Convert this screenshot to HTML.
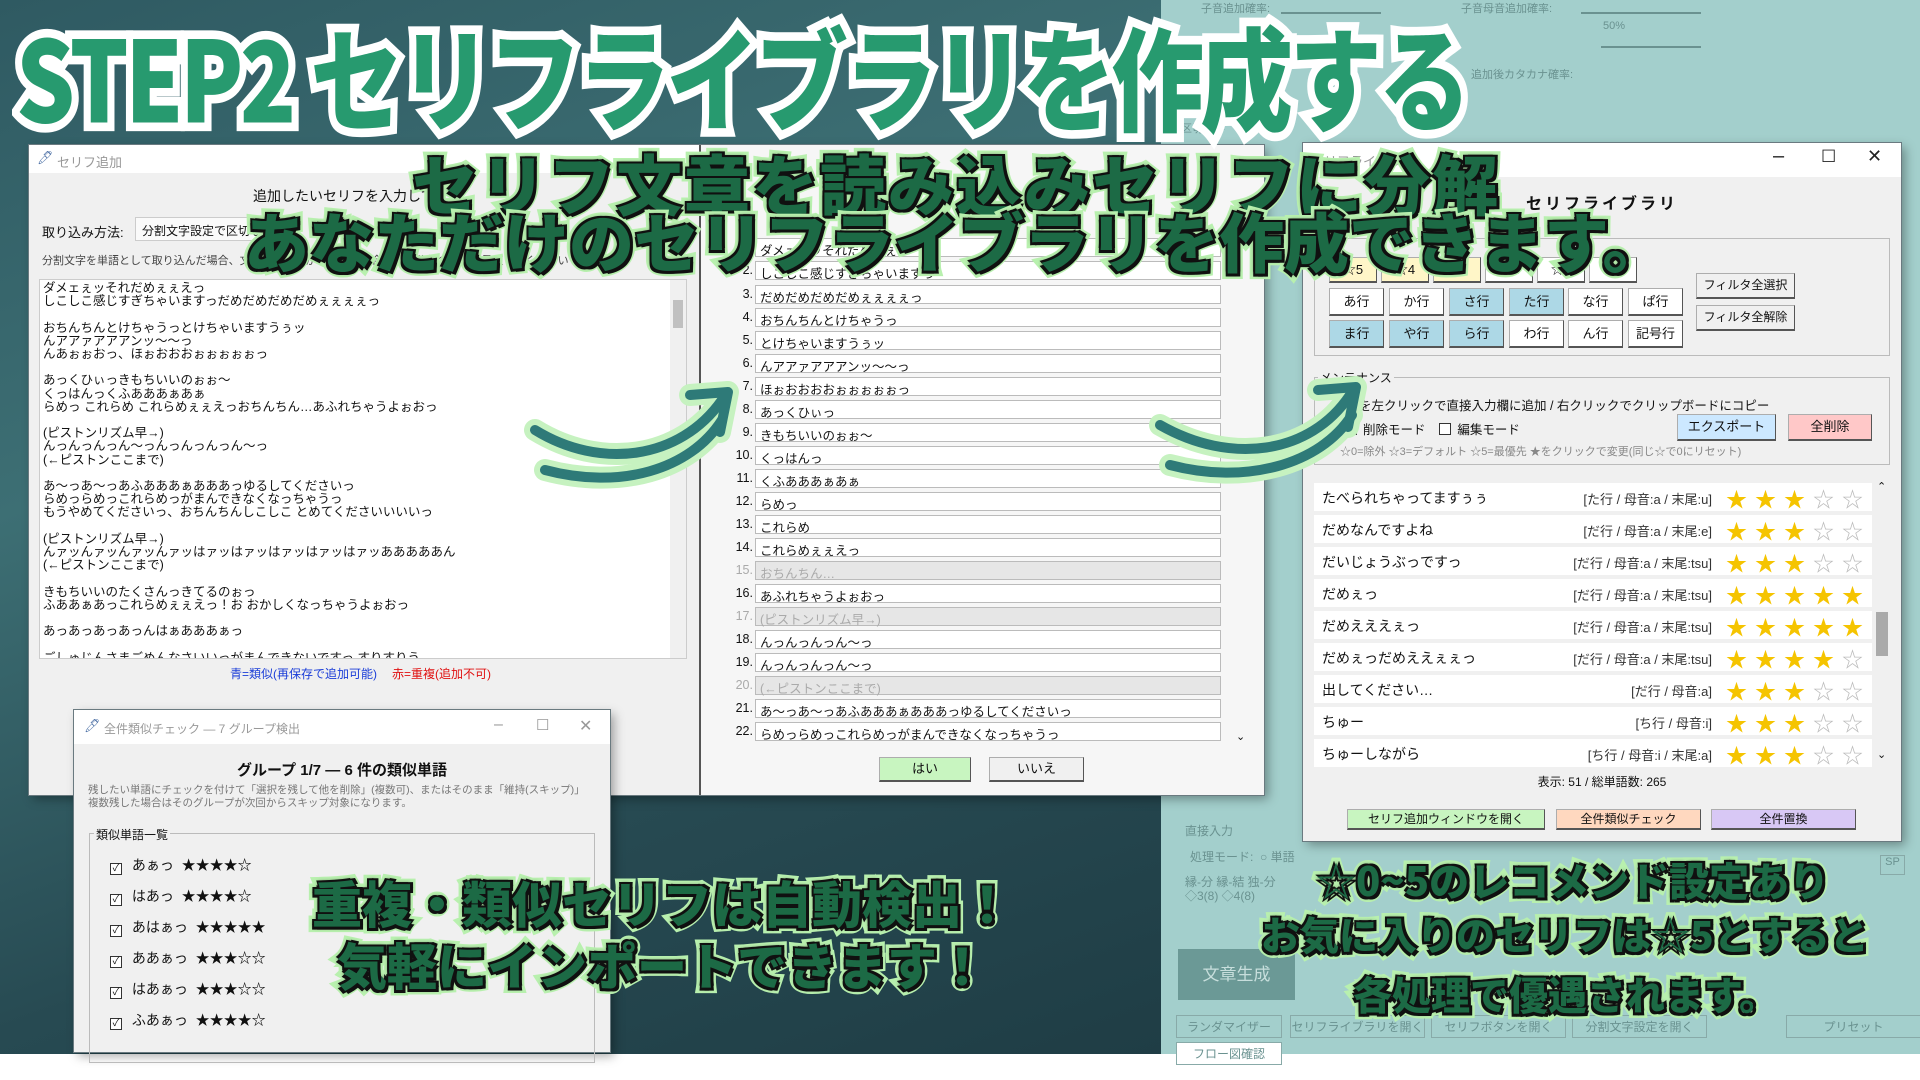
<!DOCTYPE html>
<html><head><meta charset="utf-8">
<style>
*{margin:0;padding:0;box-sizing:border-box}
body{width:1920px;height:1080px;overflow:hidden;position:relative;background:#fff;font-family:"Liberation Sans","Noto Sans CJK JP",sans-serif;color:#111}
.abs{position:absolute}
#bgl{left:0;top:0;width:1161px;height:1054px;background:linear-gradient(160deg,#2f5a62 0%,#3d6f74 35%,#274a52 70%,#1f3d45 100%)}
#bgr{left:1161px;top:0;width:759px;height:1054px;background:#a3cfcc}
.win{position:absolute;background:#f0f0f0;box-shadow:0 0 0 1px #6a7a80,4px 4px 10px rgba(0,0,0,.35)}
.tb{position:absolute;left:0;top:0;right:0;background:#fff;color:#999;font-size:13px}
.btn{position:absolute;border:1px solid #adadad;border-right-color:#555;border-bottom:2px solid #555;background:#fff;font-size:13px;text-align:center;font-family:"Liberation Sans","Noto Sans CJK JP",sans-serif}
.row{position:absolute;left:1314px;width:558px;height:28px;background:#fff;font-size:14px}
.row .w{position:absolute;left:8px;top:5px}
.row .t{position:absolute;right:160px;top:6px;font-size:13px;color:#333}
.row .s{position:absolute;left:412px;top:1px;font-size:21px;letter-spacing:8px;color:#f5c400}
.row .s i{font-style:normal;color:#bbb}
.nl{position:absolute;left:705px;width:520px;height:19px;font-size:12.5px}
.nl b{position:absolute;right:472px;font-weight:normal;top:2px}
.nl span{position:absolute;left:50px;width:466px;height:19px;background:#fff;border:1px solid #bbb;padding:1px 4px}
.nl.g span{background:#e6e6e6;color:#aaa}
.nl.g b{color:#aaa}
.ta{font-size:12.5px;line-height:13.2px;white-space:pre}
.title{font-family:"Noto Sans CJK JP",sans-serif;font-weight:900;white-space:nowrap;paint-order:stroke fill}
#t1{left:16px;top:-8px;font-size:104px;color:#279a6f;-webkit-text-stroke:16px #fff;letter-spacing:-4px;transform:scale(0.89,1.08);transform-origin:left top}
.sub{color:#1c6a45;-webkit-text-stroke:11px #b8f0ae;text-shadow:0 0 4px #111,3px 3px 0 #111,-2px -2px 0 #111,3px -2px 0 #111,-2px 3px 0 #111}
.cb{display:inline-block;width:12px;height:12px;border:1px solid #333;background:#fff;vertical-align:-1px;margin-right:6px;font-size:10px;line-height:10px;text-align:center}
</style></head><body>
<div id="bgl" class="abs"></div>
<div id="bgr" class="abs"></div>

<div class="abs" style="left:1161px;top:0;width:759px;height:140px;color:#6a9290;font-size:11px">
 <div class="abs" style="left:40px;top:0">子音追加確率:</div>
 <div class="abs" style="left:300px;top:0">子音母音追加確率:</div>
 <div class="abs" style="left:310px;top:66px">追加後カタカナ確率:</div>
 <div class="abs" style="left:442px;top:20px">50%</div>
 <div class="abs" style="left:440px;top:46px;width:100px;height:2px;background:#6a9290"></div>
 <div class="abs" style="left:120px;top:12px;width:100px;height:2px;background:#6a9290"></div>
 <div class="abs" style="left:420px;top:12px;width:120px;height:2px;background:#6a9290"></div>
 <div class="abs" style="left:20px;top:120px">区切文字</div>
</div>
<div class="abs" style="left:1178px;top:949px;width:117px;height:51px;background:#6b9996;color:#c7dedc;font-size:17px;text-align:center;line-height:51px">文章生成</div>
<div class="abs" style="left:1185px;top:822px;color:#6a9290;font-size:12px">直接入力</div>
<div class="abs" style="left:1190px;top:848px;color:#6a9290;font-size:12px">処理モード:&nbsp; ○ 単語</div>
<div class="abs" style="left:1185px;top:875px;color:#6a9290;font-size:12px;line-height:14px">縁-分 縁-結 独-分<br>◇3(8) ◇4(8)</div>
<div class="abs" style="left:1880px;top:855px;width:25px;height:20px;border:1px solid #88aaa8;color:#6a9290;font-size:11px;text-align:center">SP</div>
<div class="abs" style="left:1176px;top:1015px;width:1115px;height:24px;color:#6a9290;font-size:12px">
 <span class="abs" style="left:0;width:106px;height:23px;border:1px solid #88aaa8;text-align:center;line-height:22px">ランダマイザー</span>
 <span class="abs" style="left:114px;width:135px;height:23px;border:1px solid #88aaa8;text-align:center;line-height:22px">セリフライブラリを開く</span>
 <span class="abs" style="left:255px;width:135px;height:23px;border:1px solid #88aaa8;text-align:center;line-height:22px">セリフボタンを開く</span>
 <span class="abs" style="left:396px;width:135px;height:23px;border:1px solid #88aaa8;text-align:center;line-height:22px">分割文字設定を開く</span>
 <span class="abs" style="left:610px;width:135px;height:23px;border:1px solid #88aaa8;text-align:center;line-height:22px">プリセット</span>
</div>
<div class="abs" style="left:1176px;top:1042px;width:106px;height:23px;border:1px solid #88aaa8;color:#6a9290;font-size:12px;text-align:center;line-height:22px;background:#fff">フロー図確認</div>

<div class="win" style="left:29px;top:145px;width:1235px;height:650px">
 <div class="tb" style="height:28px"><span class="abs" style="left:8px;top:5px;color:#5577aa">🖊</span><span class="abs" style="left:28px;top:7px">セリフ追加</span></div>
 <div class="abs" style="left:224px;top:41px;font-size:14px">追加したいセリフを入力して</div>
 <div class="abs" style="left:13px;top:77px;font-size:13px">取り込み方法:</div>
 <div class="abs" style="left:106px;top:72px;width:150px;height:24px;background:#fafafa;border:1px solid #ccc;font-size:12px;padding:4px 6px">分割文字設定で区切る</div>
 <div class="abs" style="left:13px;top:107px;font-size:11px;color:#444">分割文字を単語として取り込んだ場合、文章として繋がらない組み合わせ…分割の設定を見直してください</div>
 <div class="abs" style="left:10px;top:134px;width:648px;height:380px;background:#fff;border:1px solid #ccc;overflow:hidden">
  <div class="ta" style="padding:2px 3px">ダメェぇッそれだめぇぇえっ
しこしこ感じすぎちゃいますっだめだめだめだめぇぇぇぇっ

おちんちんとけちゃうっとけちゃいますうぅッ
んアアァアアアンッ〜〜っ
んあぉぉおっ、ほぉおおおぉぉぉぉぉっ

あっくひぃっきもちいいのぉぉ〜
くっはんっくふあああぁあぁ
らめっ これらめ これらめぇぇえっおちんちん…あふれちゃうよぉおっ

(ピストンリズム早→)
んっんっんっん〜っんっんっんっん〜っ
(←ピストンここまで)

あ〜っあ〜っあふあああぁあああっゆるしてくださいっ
らめっらめっこれらめっがまんできなくなっちゃうっ
もうやめてくださいっ、おちんちんしこしこ とめてくださいいいいっ

(ピストンリズム早→)
んァッんァッんァッんァッはァッはァッはァッはァッはァッあああああん
(←ピストンここまで)

きもちいいのたくさんっきてるのぉっ
ふああぁあっこれらめぇぇえっ！お おかしくなっちゃうよぉおっ

あっあっあっあっんはぁあああぁっ

ごしゅじんさまごめんなさいいっがまんできないですっ すりすりう</div>
  <div class="abs" style="right:0;top:0;width:16px;height:380px;background:#f0f0f0"><div class="abs" style="left:3px;top:20px;width:10px;height:28px;background:#c0c0c0"></div></div>
 </div>
 <div class="abs" style="left:201px;top:520px;font-size:12px;color:#1a3dd8">青=類似(再保存で追加可能)</div>
 <div class="abs" style="left:363px;top:520px;font-size:12px;color:#e01010">赤=重複(追加不可)</div>
 <div class="abs" style="left:670px;top:0;width:2px;height:650px;background:#555"></div>
 <div class="abs" style="left:672px;top:0;width:563px;height:650px;background:#f6f6f6"></div>
</div>

<div class="abs" style="left:1190px;top:240px;font-size:11px">3</div>
<div class="nl" style="top:238px"><b>1.</b><span>ダメェぇッそれだめぇぇ</span></div>
<div class="nl" style="top:261px"><b>2.</b><span>しこしこ感じすぎちゃいますっ</span></div>
<div class="nl" style="top:285px"><b>3.</b><span>だめだめだめだめぇぇぇぇっ</span></div>
<div class="nl" style="top:308px"><b>4.</b><span>おちんちんとけちゃうっ</span></div>
<div class="nl" style="top:331px"><b>5.</b><span>とけちゃいますうぅッ</span></div>
<div class="nl" style="top:354px"><b>6.</b><span>んアアァアアアンッ〜〜っ</span></div>
<div class="nl" style="top:377px"><b>7.</b><span>ほぉおおおおぉぉぉぉぉっ</span></div>
<div class="nl" style="top:400px"><b>8.</b><span>あっくひぃっ</span></div>
<div class="nl" style="top:423px"><b>9.</b><span>きもちいいのぉぉ〜</span></div>
<div class="nl" style="top:446px"><b>10.</b><span>くっはんっ</span></div>
<div class="nl" style="top:469px"><b>11.</b><span>くふあああぁあぁ</span></div>
<div class="nl" style="top:492px"><b>12.</b><span>らめっ</span></div>
<div class="nl" style="top:515px"><b>13.</b><span>これらめ</span></div>
<div class="nl" style="top:538px"><b>14.</b><span>これらめぇぇえっ</span></div>
<div class="nl g" style="top:561px"><b>15.</b><span>おちんちん…</span></div>
<div class="nl" style="top:584px"><b>16.</b><span>あふれちゃうよぉおっ</span></div>
<div class="nl g" style="top:607px"><b>17.</b><span>(ピストンリズム早→)</span></div>
<div class="nl" style="top:630px"><b>18.</b><span>んっんっんっん〜っ</span></div>
<div class="nl" style="top:653px"><b>19.</b><span>んっんっんっん〜っ</span></div>
<div class="nl g" style="top:676px"><b>20.</b><span>(←ピストンここまで)</span></div>
<div class="nl" style="top:699px"><b>21.</b><span>あ〜っあ〜っあふあああぁあああっゆるしてくださいっ</span></div>
<div class="nl" style="top:722px"><b>22.</b><span>らめっらめっこれらめっがまんできなくなっちゃうっ</span></div>
<div class="abs" style="left:1236px;top:730px;font-size:11px">⌄</div>
<div class="btn" style="left:879px;top:757px;width:92px;height:25px;background:#c8f5c0;line-height:22px">はい</div>
<div class="btn" style="left:989px;top:757px;width:95px;height:25px;background:#f0f0f0;line-height:22px">いいえ</div>

<div class="win" style="left:74px;top:710px;width:536px;height:342px">
 <div class="tb" style="height:34px"><span class="abs" style="left:10px;top:8px;color:#5577aa">🖊</span><span class="abs" style="left:30px;top:10px;font-size:12px">全件類似チェック — 7 グループ検出</span>
 <span class="abs" style="left:420px;top:6px;font-size:16px">–</span><span class="abs" style="left:462px;top:6px;font-size:15px">☐</span><span class="abs" style="left:505px;top:6px;font-size:16px">✕</span></div>
 <div class="abs" style="left:0;width:536px;top:49px;text-align:center;font-size:15px;font-weight:bold">グループ 1/7 — 6 件の類似単語</div>
 <div class="abs" style="left:14px;top:74px;font-size:10.5px;color:#777;line-height:13px;white-space:nowrap">残したい単語にチェックを付けて「選択を残して他を削除」(複数可)、またはそのまま「維持(スキップ)」<br>複数残した場合はそのグループが次回からスキップ対象になります。</div>
 <div class="abs" style="left:15px;top:123px;width:506px;height:230px;border:1px solid #bbb"></div>
 <div class="abs" style="left:20px;top:116px;font-size:12px;background:#f0f0f0;padding:0 2px">類似単語一覧</div>
 <div class="abs" style="left:36px;top:140px;font-size:14px;line-height:31px">
  <div><span class="cb">✓</span> あぁっ&nbsp; <b>★★★★☆</b></div>
  <div><span class="cb">✓</span> はあっ&nbsp; <b>★★★★☆</b></div>
  <div><span class="cb">✓</span> あはぁっ&nbsp; <b>★★★★★</b></div>
  <div><span class="cb">✓</span> ああぁっ&nbsp; <b>★★★☆☆</b></div>
  <div><span class="cb">✓</span> はあぁっ&nbsp; <b>★★★☆☆</b></div>
  <div><span class="cb">✓</span> ふあぁっ&nbsp; <b>★★★★☆</b></div>
 </div>
</div>

<div class="win" style="left:1303px;top:143px;width:598px;height:698px">
 <div class="tb" style="height:34px"><span class="abs" style="left:8px;top:8px">セリフライブラリ</span>
 <span class="abs" style="left:470px;top:2px;font-size:20px;color:#222">–</span><span class="abs" style="left:518px;top:4px;font-size:17px;color:#222">☐</span><span class="abs" style="left:564px;top:3px;font-size:18px;color:#222">✕</span></div>
 <div class="abs" style="left:0;width:598px;top:47px;text-align:center;font-size:16px;font-weight:bold;letter-spacing:3px">セリフライブラリ</div>
 <div class="abs" style="left:11px;top:95px;width:576px;height:118px;border:1px solid #bbb"></div>
</div>
<div class="btn" style="left:1329px;top:257px;width:48px;height:26px;background:#fff6c8;line-height:23px">☆5</div>
<div class="btn" style="left:1381px;top:257px;width:48px;height:26px;background:#fff6c8;line-height:23px">☆4</div>
<div class="btn" style="left:1433px;top:257px;width:48px;height:26px;background:#fff6c8;line-height:23px">☆3</div>
<div class="btn" style="left:1485px;top:257px;width:48px;height:26px;line-height:23px">☆2</div>
<div class="btn" style="left:1537px;top:257px;width:48px;height:26px;line-height:23px">☆1</div>
<div class="btn" style="left:1589px;top:257px;width:48px;height:26px;line-height:23px">☆0</div>
<div class="btn" style="left:1329px;top:288px;width:55px;height:28px;line-height:25px">あ行</div>
<div class="btn" style="left:1389px;top:288px;width:55px;height:28px;line-height:25px">か行</div>
<div class="btn" style="left:1449px;top:288px;width:55px;height:28px;line-height:25px;background:#add8e6">さ行</div>
<div class="btn" style="left:1509px;top:288px;width:55px;height:28px;line-height:25px;background:#add8e6">た行</div>
<div class="btn" style="left:1568px;top:288px;width:55px;height:28px;line-height:25px">な行</div>
<div class="btn" style="left:1628px;top:288px;width:55px;height:28px;line-height:25px">ぱ行</div>
<div class="btn" style="left:1329px;top:320px;width:55px;height:28px;line-height:25px;background:#add8e6">ま行</div>
<div class="btn" style="left:1389px;top:320px;width:55px;height:28px;line-height:25px;background:#add8e6">や行</div>
<div class="btn" style="left:1449px;top:320px;width:55px;height:28px;line-height:25px;background:#add8e6">ら行</div>
<div class="btn" style="left:1509px;top:320px;width:55px;height:28px;line-height:25px">わ行</div>
<div class="btn" style="left:1568px;top:320px;width:55px;height:28px;line-height:25px">ん行</div>
<div class="btn" style="left:1628px;top:320px;width:55px;height:28px;line-height:25px">記号行</div>
<div class="btn" style="left:1696px;top:273px;width:99px;height:26px;line-height:23px;background:#f0f0f0;font-size:12px">フィルタ全選択</div>
<div class="btn" style="left:1696px;top:305px;width:99px;height:26px;line-height:23px;background:#f0f0f0;font-size:12px">フィルタ全解除</div>
<div class="abs" style="left:1314px;top:377px;width:576px;height:88px;border:1px solid #bbb"></div>
<div class="abs" style="left:1318px;top:369px;font-size:12px;background:#f0f0f0;padding:0 2px">メンテナンス</div>
<div class="abs" style="left:1334px;top:395px;font-size:12.5px">単語を左クリックで直接入力欄に追加 / 右クリックでクリップボードにコピー</div>
<div class="abs" style="left:1345px;top:419px;font-size:12.5px"><span class="cb"></span>削除モード&nbsp;&nbsp;&nbsp;&nbsp;<span class="cb"></span>編集モード</div>
<div class="abs" style="left:1340px;top:443px;font-size:11px;color:#888">☆0=除外 ☆3=デフォルト ☆5=最優先 ★をクリックで変更(同じ☆で0にリセット)</div>
<div class="btn" style="left:1677px;top:414px;width:99px;height:27px;line-height:24px;background:#cce8ff">エクスポート</div>
<div class="btn" style="left:1788px;top:414px;width:84px;height:27px;line-height:24px;background:#ffc8c8">全削除</div>

<div class="row" style="top:483px"><span class="w">たべられちゃってますぅぅ</span><span class="t">[た行 / 母音:a / 末尾:u]</span><span class="s">★★★<i>☆☆</i></span></div>
<div class="row" style="top:515px"><span class="w">だめなんですよね</span><span class="t">[だ行 / 母音:a / 末尾:e]</span><span class="s">★★★<i>☆☆</i></span></div>
<div class="row" style="top:547px"><span class="w">だいじょうぶっですっ</span><span class="t">[だ行 / 母音:a / 末尾:tsu]</span><span class="s">★★★<i>☆☆</i></span></div>
<div class="row" style="top:579px"><span class="w">だめぇっ</span><span class="t">[だ行 / 母音:a / 末尾:tsu]</span><span class="s">★★★★★</span></div>
<div class="row" style="top:611px"><span class="w">だめえええぇっ</span><span class="t">[だ行 / 母音:a / 末尾:tsu]</span><span class="s">★★★★★</span></div>
<div class="row" style="top:643px"><span class="w">だめぇっだめええぇぇっ</span><span class="t">[だ行 / 母音:a / 末尾:tsu]</span><span class="s">★★★★<i>☆</i></span></div>
<div class="row" style="top:675px"><span class="w">出してください…</span><span class="t">[だ行 / 母音:a]</span><span class="s">★★★<i>☆☆</i></span></div>
<div class="row" style="top:707px"><span class="w">ちゅー</span><span class="t">[ち行 / 母音:i]</span><span class="s">★★★<i>☆☆</i></span></div>
<div class="row" style="top:739px"><span class="w">ちゅーしながら</span><span class="t">[ち行 / 母音:i / 末尾:a]</span><span class="s">★★★<i>☆☆</i></span></div>
<div class="abs" style="left:1877px;top:480px;font-size:11px">⌃</div>
<div class="abs" style="left:1876px;top:612px;width:12px;height:44px;background:#aaa"></div>
<div class="abs" style="left:1877px;top:748px;font-size:11px">⌄</div>
<div class="abs" style="left:1303px;top:773px;width:598px;text-align:center;font-size:12px">表示: 51 / 総単語数: 265</div>
<div class="btn" style="left:1347px;top:809px;width:198px;height:21px;line-height:18px;background:#c8f5c0;font-size:12px">セリフ追加ウィンドウを開く</div>
<div class="btn" style="left:1556px;top:809px;width:145px;height:21px;line-height:18px;background:#ffd8bf;font-size:12px">全件類似チェック</div>
<div class="btn" style="left:1711px;top:809px;width:145px;height:21px;line-height:18px;background:#d8c8f5;font-size:12px">全件置換</div>

<svg class="abs" style="left:0;top:0" width="1920" height="1080">
 <g fill="none" stroke-linecap="round" stroke-linejoin="round">
  <g stroke="#c6f2c0" stroke-width="22">
   <path d="M535 430 C600 470 680 460 722 400"/><path d="M545 470 C620 490 690 470 722 420"/><path d="M690 395 L728 392 L720 432"/>
   <path d="M1160 425 C1230 465 1310 455 1350 395"/><path d="M1170 465 C1245 485 1320 465 1352 415"/><path d="M1318 390 L1356 387 L1348 427"/>
  </g>
  <g stroke="#2e7a78" stroke-width="10">
   <path d="M535 430 C600 470 680 460 722 400"/><path d="M545 470 C620 490 690 470 722 420"/><path d="M690 395 L728 392 L720 432"/>
   <path d="M1160 425 C1230 465 1310 455 1350 395"/><path d="M1170 465 C1245 485 1320 465 1352 415"/><path d="M1318 390 L1356 387 L1348 427"/>
  </g>
 </g>
</svg>

<div id="t1" class="abs title">STEP2 セリフライブラリを作成する</div>
<div class="abs title sub" style="left:412px;top:134px;font-size:66px;letter-spacing:2px">セリフ文章を読み込みセリフに分解</div>
<div class="abs title sub" style="left:244px;top:192px;font-size:65px;letter-spacing:0px">あなただけのセリフライブラリを作成できます。</div>
<div class="abs title sub" style="left:312px;top:866px;font-size:50px">重複・類似セリフは自動検出！</div>
<div class="abs title sub" style="left:337px;top:928px;font-size:50px">気軽にインポートできます！</div>
<div class="abs title sub" style="left:1316px;top:850px;font-size:40px">☆0~5のレコメンド設定あり</div>
<div class="abs title sub" style="left:1261px;top:906px;font-size:39px">お気に入りのセリフは☆5とすると</div>
<div class="abs title sub" style="left:1353px;top:966px;font-size:39px">各処理で優遇されます。</div>
</body></html>
